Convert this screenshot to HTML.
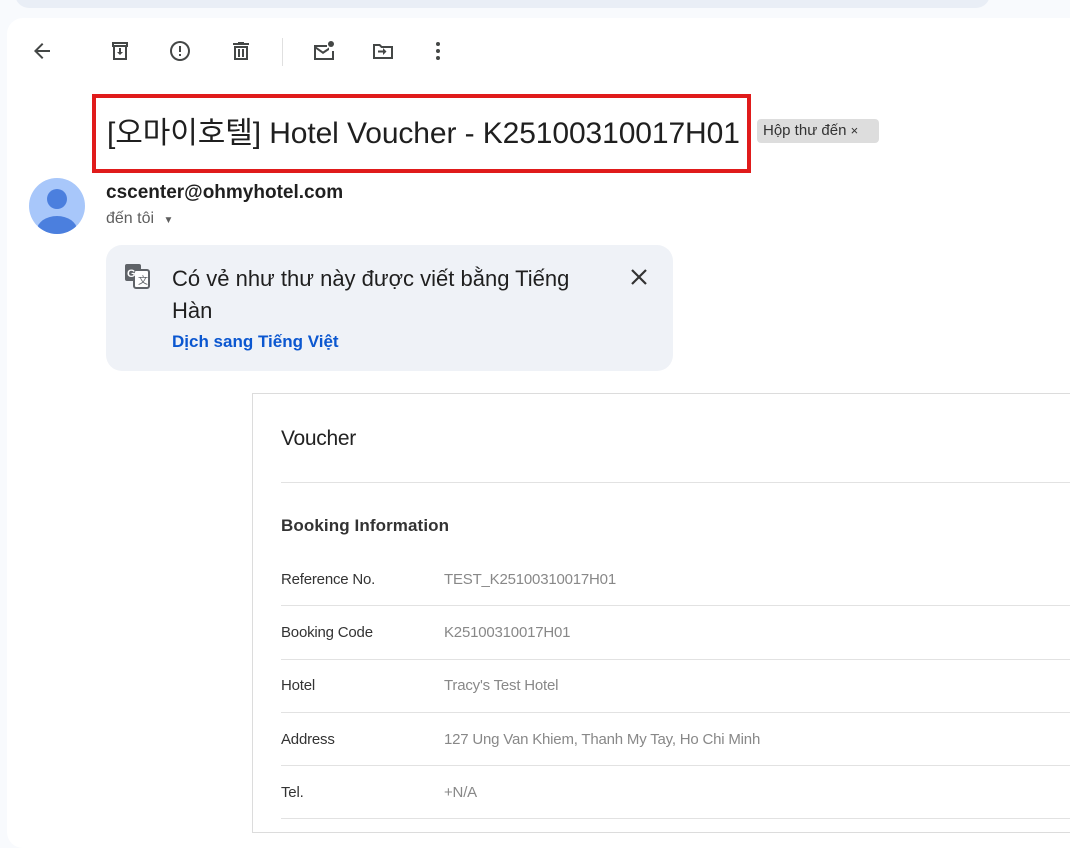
<!DOCTYPE html>
<html><head><meta charset="utf-8"><style>
*{margin:0;padding:0;box-sizing:border-box}
body{width:1070px;height:822px;background:#f8fafd;font-family:"Liberation Sans","Noto Sans CJK KR",sans-serif;position:relative;overflow:hidden;color:#1f1f1f}
.abs{position:absolute}
.top{left:15px;top:-20px;width:975px;height:28px;background:#e9eef6;border-radius:16px}
.card{left:7px;top:18px;width:1080px;height:830px;background:#fff;border-radius:16px}
svg.i{position:absolute;width:24px;height:24px;fill:#444746}
.title{left:107px;top:108px;font-size:30px;color:#1f1f1f;white-space:nowrap;letter-spacing:-0.1px}
.red{left:92px;top:94px;width:659px;height:79px;border:4px solid #e01b1b}
.chip{left:757px;top:119px;width:122px;height:24px;background:#dddddd;border-radius:4px;font-size:15px;color:#333;padding:3px 0 0 6px;white-space:nowrap}
.tr{left:106px;top:245px;width:567px;height:126px;background:#eff2f7;border-radius:16px}
.v{font-family:"Liberation Sans",sans-serif;letter-spacing:-0.2px;font-size:15px}
.row{position:absolute;left:281px;width:800px;height:1px;background:#e2e2e2}
</style></head><body>
<div class="abs top"></div>
<div class="abs card"></div>
<svg class="i" style="left:30px;top:39px" viewBox="0 0 24 24"><path d="M20 11H7.8l5.6-5.6L12 4l-8 8 8 8 1.4-1.4L7.8 13H20z"/></svg>
<svg class="i" style="left:108px;top:39px" viewBox="0 0 24 24"><path d="M4 3h16v5h-1v13H5V8H4zm2 2v1h12V5zm1 3v11h10V8zm4 1h2v4h2l-3 3-3-3h2z"/></svg>
<svg class="i" style="left:168px;top:39px" viewBox="0 0 24 24"><path d="M12 2a10 10 0 1 0 0 20 10 10 0 0 0 0-20zm0 2a8 8 0 1 1 0 16 8 8 0 0 1 0-16zm-1 3h2v6h-2zm0 8h2v2h-2z"/></svg>
<svg class="i" style="left:229px;top:39px" viewBox="0 0 24 24"><path d="M9 3h6v1h5v2H4V4h5zM5 7h14v14H5zm2 2v10h10V9zm2 1h2v8H9zm4 0h2v8h-2z"/></svg>
<div class="abs" style="left:282px;top:38px;width:1px;height:28px;background:#e0e0e0"></div>
<svg class="i" style="left:311px;top:39px" viewBox="0 0 24 24"><path d="M3 6h13v2H5.5l6.5 4.5 6-4V11l-6 4-7-5v9h16v-7h2v9H3z"/><circle cx="20" cy="5" r="3"/></svg>
<svg class="i" style="left:371px;top:39px" viewBox="0 0 24 24"><path d="M2 5h7l2 2h11v13H2zm2 2v11h16V9h-9.8l-2-2zm8 2 3.5 3.5L12 16v-2.5H7v-2h5z"/></svg>
<svg class="i" style="left:426px;top:39px" viewBox="0 0 24 24"><circle cx="12" cy="5" r="2"/><circle cx="12" cy="12" r="2"/><circle cx="12" cy="19" r="2"/></svg>
<div class="abs title">[오마이호텔] Hotel Voucher - K25100310017H01</div>
<div class="abs red"></div>
<div class="abs chip">Hộp thư đến <span style="font-size:13px">×</span></div>
<svg class="abs" style="left:29px;top:178px" width="56" height="56" viewBox="0 0 56 56"><defs><clipPath id="c"><circle cx="28" cy="28" r="28"/></clipPath></defs><circle cx="28" cy="28" r="28" fill="#a8c7fa"/><g clip-path="url(#c)" fill="#4b7fde"><circle cx="28" cy="21" r="10"/><ellipse cx="28" cy="52" rx="20" ry="14"/></g></svg>
<div class="abs" style="left:106px;top:182px;font-size:19px;font-weight:bold;color:#1f1f1f">cscenter@ohmyhotel.com</div>
<div class="abs" style="left:106px;top:210px;font-size:16px;color:#5e5e5e">đến tôi <span style="font-size:10px;margin-left:5px">▼</span></div>
<div class="abs tr"></div>
<svg class="abs" style="left:125px;top:264px" width="28" height="26" viewBox="0 0 28 26"><rect x="0" y="0" width="16" height="17" rx="2" fill="#5f6368"/><rect x="9" y="6" width="15" height="18" rx="2" fill="#fff" stroke="#5f6368" stroke-width="2"/><text x="2" y="13" font-size="11" font-weight="bold" fill="#fff" font-family="Liberation Sans">G</text><text x="13" y="20" font-size="10" fill="#5f6368" font-family="Liberation Sans">文</text></svg>
<div class="abs" style="left:172px;top:263px;font-size:22px;line-height:32px;color:#1f1f1f;width:425px">Có vẻ như thư này được viết bằng Tiếng Hàn</div>
<div class="abs" style="left:172px;top:332px;font-size:17px;font-weight:bold;color:#0b57d0">Dịch sang Tiếng Việt</div>
<svg class="abs" style="left:629px;top:267px" width="20" height="20" viewBox="0 0 20 20"><path d="M3 3l14 14M17 3 3 17" stroke="#333" stroke-width="2.2"/></svg>
<div class="abs" style="left:252px;top:393px;width:830px;height:440px;border:1px solid #dcdcdc;border-right:none"></div>
<div class="abs" style="left:281px;top:427px;font-size:21px;letter-spacing:-0.3px;color:#222">Voucher</div>
<div class="row" style="top:482px"></div>
<div class="abs" style="left:281px;top:516px;font-size:17px;font-weight:bold;letter-spacing:0.1px;color:#333">Booking Information</div>
<div class="abs v" style="left:281px;top:571px;color:#333">Reference No.</div>
<div class="abs v" style="left:444px;top:571px;color:#888">TEST_K25100310017H01</div>
<div class="row" style="top:605px"></div>
<div class="abs v" style="left:281px;top:624px;color:#333">Booking Code</div>
<div class="abs v" style="left:444px;top:624px;color:#888">K25100310017H01</div>
<div class="row" style="top:659px"></div>
<div class="abs v" style="left:281px;top:677px;color:#333">Hotel</div>
<div class="abs v" style="left:444px;top:677px;color:#888">Tracy's Test Hotel</div>
<div class="row" style="top:712px"></div>
<div class="abs v" style="left:281px;top:731px;color:#333">Address</div>
<div class="abs v" style="left:444px;top:731px;color:#888">127 Ung Van Khiem, Thanh My Tay, Ho Chi Minh</div>
<div class="row" style="top:765px"></div>
<div class="abs v" style="left:281px;top:784px;color:#333">Tel.</div>
<div class="abs v" style="left:444px;top:784px;color:#888">+N/A</div>
<div class="row" style="top:818px"></div>
</body></html>
